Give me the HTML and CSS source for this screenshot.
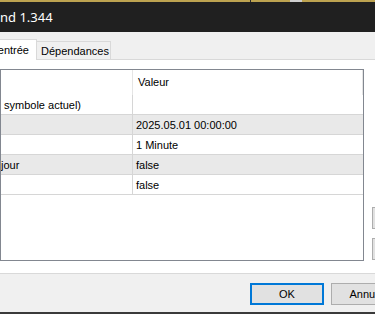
FILE: index.html
```html
<!DOCTYPE html>
<html lang="fr">
<head>
  <meta charset="UTF-8">
  <meta name="viewport" content="width=device-width, initial-scale=1.0">
  <title>Propriétés - 1.344</title>
  <link rel="stylesheet" href="styles.css">
</head>
<body>

  <div class="window">
    <!-- bord de la fenêtre derrière -->
    <div class="top-edge">
      <span class="tick tick-dark"></span>
      <span class="tick tick-light"></span>
    </div>

    <div class="titlebar">
      <span class="title">nd 1.344</span>
    </div>

    <div class="dialog">
      <!-- Onglets -->
      <div class="tabs">
        <div class="tab tab-active">entrée</div>
        <div class="tab">Dépendances</div>
      </div>

      <div class="panel">
        <div class="listbox">
          <div class="row row-header">
            <div class="name"></div>
            <div class="value">Valeur</div>
          </div>
          <div class="row">
            <div class="name">symbole actuel)</div>
            <div class="value"></div>
          </div>
          <div class="row row-alt">
            <div class="name"></div>
            <div class="value">2025.05.01 00:00:00</div>
          </div>
          <div class="row">
            <div class="name"></div>
            <div class="value">1 Minute</div>
          </div>
          <div class="row row-alt">
            <div class="name name-cut">jour</div>
            <div class="value">false</div>
          </div>
          <div class="row">
            <div class="name"></div>
            <div class="value">false</div>
          </div>
        </div>

        <!-- boutons à droite, libellés hors cadre -->
        <div class="side-buttons">
          <button class="btn" aria-label="Charger"></button>
          <button class="btn" aria-label="Enregistrer"></button>
        </div>
      </div>

      <div class="footer">
        <button class="btn btn-default">OK</button>
        <button class="btn">Annuler</button>
      </div>
    </div>

    <div class="bottom-edge"></div>
  </div>

</body>
</html>
```

FILE: styles.css
```css
/* Général */
* {
  box-sizing: border-box;
}

body {
  margin: 0;
  width: 375px;
  height: 314px;
  overflow: hidden;
  background-color: #f0f0f0;
  font-family: 'Liberation Sans', Arial, sans-serif;
  font-size: 11px;
  color: #000;
}

.window {
  width: 440px;
}

/* Bord doré de la fenêtre derrière */
.top-edge {
  position: relative;
  height: 2px;
  background-color: #bda350;
}

.tick {
  position: absolute;
  top: 0;
  height: 2px;
}

.tick-dark {
  left: 250px;
  width: 1px;
  background-color: #2a2a2a;
}

.tick-light {
  left: 290px;
  width: 12px;
  background-color: #cfcfcf;
}

/* Barre de titre */
.titlebar {
  height: 30px;
  background-color: #202020;
  color: #fff;
  display: flex;
  align-items: center;
  font-family: 'Noto Sans', sans-serif;
  font-size: 13px;
}

/* Dialogue */
.dialog {
  background-color: #f0f0f0;
}

.tabs {
  display: flex;
  align-items: flex-start;
  height: 28px;
  padding-top: 7px;
}

.tab {
  height: 18px;
  margin-top: 2px;
  width: 74px;
  padding-left: 4px;
  border: 1px solid #d9d9d9;
  border-left: none;
  border-bottom: none;
  background-color: #f0f0f0;
  display: flex;
  align-items: center;
  white-space: nowrap;
}

.tab-active {
  position: relative;
  z-index: 1;
  margin-top: 0;
  margin-left: -1px;
  width: 38px;
  height: 21px;
  padding: 0 7px 1px 0;
  justify-content: flex-end;
  background-color: #fff;
  border-left: 1px solid #d9d9d9;
}

.panel {
  display: flex;
  margin-top: -1px;
  margin-left: -12px;
  padding: 9px 0 12px 11px;
  background-color: #fff;
  border: 1px solid #d9d9d9;
}

/* Liste des paramètres */
.listbox {
  width: 366px;
  height: 192px;
  border: 1px solid #828790;
  background-color: #fff;
}

.row {
  display: grid;
  grid-template-columns: 132px 230px;
  height: 20px;
  border-bottom: 1px solid #d6d6d6;
}

.row-alt {
  background-color: #e9e9e9;
}

.row-header {
  height: 25px;
  border-bottom: none;
}

.name,
.value {
  display: flex;
  align-items: center;
  white-space: nowrap;
  overflow: hidden;
}

.name {
  padding-left: 3px;
  border-right: 1px solid #d6d6d6;
}

.name-cut {
  padding-left: 0;
}

.value {
  padding-left: 3px;
}

.row-header .name,
.row-header .value {
  border-right: 1px solid #e5e5e5;
}

.row-header .value {
  padding-left: 5px;
  padding-bottom: 1px;
}

.side-buttons {
  display: flex;
  flex-direction: column;
  justify-content: flex-end;
  gap: 9px;
  margin-left: 8px;
  padding-bottom: 1px;
}

/* Boutons */
.btn {
  width: 75px;
  height: 22px;
  padding: 0;
  font-family: 'Liberation Sans', Arial, sans-serif;
  font-size: 11px;
  color: #000;
  background-color: #e1e1e1;
  border: 1px solid #adadad;
  border-radius: 0;
}

.footer {
  display: flex;
  gap: 7px;
  height: 38px;
  padding: 9px 0 0 250px;
}

.btn-default {
  width: 74px;
  border: 2px solid #0078d7;
}

.bottom-edge {
  height: 2px;
  background-color: #3a3a3a;
}
```
